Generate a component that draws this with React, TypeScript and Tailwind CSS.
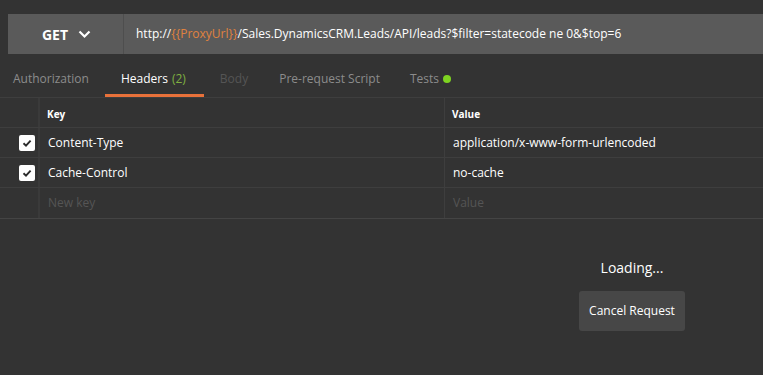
import React from "react";

const tabs = [
	{ label: "Authorization", cls: "text-[#8c8c8c] pl-[13px] pr-[16px]" },
	{ label: "Headers", cls: "text-white pl-[16px] pr-[18px]", count: "(2)", active: true },
	{ label: "Body", cls: "text-[#555555] px-[16px]" },
	{ label: "Pre-request Script", cls: "text-[#8c8c8c] px-[15px]" },
	{ label: "Tests", cls: "text-[#8c8c8c] px-[15px]", dot: true },
];

const rows = [
	{ key: "Content-Type", value: "application/x-www-form-urlencoded" },
	{ key: "Cache-Control", value: "no-cache" },
];

const Check = () => (
	<div className="w-[16px] h-[16px] rounded-[2px] bg-white flex items-center justify-center">
		<svg width="10" height="10" viewBox="0 0 10 10">
			<path d="M1.5 5.2 L4 7.6 L8.6 2.6" fill="none" stroke="#2b2b2b" strokeWidth="1.9" />
		</svg>
	</div>
);

export default function App() {
	return (
		<div
			className="w-[763px] h-[375px] bg-[#333333] overflow-hidden"
			style={{ fontFamily: '"Open Sans", "Liberation Sans", sans-serif' }}
		>
			{/* request bar */}
			<div className="pt-[14px] pl-[8px]">
				<div className="flex h-[40px] bg-[#5a5a5a]">
					<div className="w-[116px] flex items-center justify-center gap-[10px] border-r border-[#4e4e4e]">
						<span className="text-white text-[14px] font-bold pl-[2px]">GET</span>
						<svg width="13" height="9" viewBox="0 0 13 9">
							<path d="M1.5 1.5 L6.5 6.5 L11.5 1.5" fill="none" stroke="white" strokeWidth="2.2" />
						</svg>
					</div>
					<div className="flex items-center pl-[12px] text-[12px] text-white whitespace-nowrap">
						http://<span className="text-[#e0823f]">{"{{ProxyUrl}}"}</span>
						/Sales.DynamicsCRM.Leads/API/leads?$filter=statecode ne 0&amp;$top=6
					</div>
				</div>
			</div>

			{/* tabs */}
			<div className="flex h-[44px] items-stretch border-b border-[#3e3e3e] text-[12px]">
				{tabs.map((t) => (
					<div key={t.label} className={`relative flex items-center pt-[6px] ${t.cls}`}>
						<span>{t.label}</span>
						{t.count && <span className="ml-[4px] text-[#7fb041]">{t.count}</span>}
						{t.dot && <span className="ml-[4px] w-[8px] h-[8px] rounded-full bg-[#7ed321]" />}
						{t.active && <div className="absolute left-0 right-0 bottom-0 h-[3px] bg-[#e8713a]" />}
					</div>
				))}
			</div>

			{/* headers table */}
			<div className="border-b border-[#444444]">
				<div className="flex h-[30px] border-b border-[#3e3e3e] text-[10px] font-bold text-white">
					<div className="w-[40px] border-r-2 border-[#3a3a3a]" />
					<div className="w-[405px] border-r border-[#3e3e3e] flex items-center pl-[7px] pt-[3px]">Key</div>
					<div className="flex-1 flex items-center pl-[7px] pt-[3px]">Value</div>
				</div>
				{rows.map((r) => (
					<div key={r.key} className="flex h-[30px] border-b border-[#3e3e3e] text-[12px] text-white">
						<div className="w-[40px] border-r-2 border-[#3a3a3a] flex items-center justify-end pr-[3px]">
							<Check />
						</div>
						<div className="w-[405px] border-r border-[#3e3e3e] flex items-center pl-[8px]">{r.key}</div>
						<div className="flex-1 flex items-center pl-[8px]">{r.value}</div>
					</div>
				))}
				<div className="flex h-[30px] text-[12px] text-[#555555]">
					<div className="w-[40px] border-r-2 border-[#3a3a3a]" />
					<div className="w-[405px] border-r border-[#3e3e3e] flex items-center pl-[8px]">New key</div>
					<div className="flex-1 flex items-center pl-[8px]">Value</div>
				</div>
			</div>

			{/* loading */}
			<div className="flex justify-end pr-[78px] pt-[38px]">
				<div className="w-[106px] flex flex-col items-center">
					<div className="text-[14px] text-white">Loading...</div>
					<button className="mt-[13px] w-[106px] h-[40px] rounded-[3px] bg-[#474747] text-[12px] text-white">
						Cancel Request
					</button>
				</div>
			</div>
		</div>
	);
}
